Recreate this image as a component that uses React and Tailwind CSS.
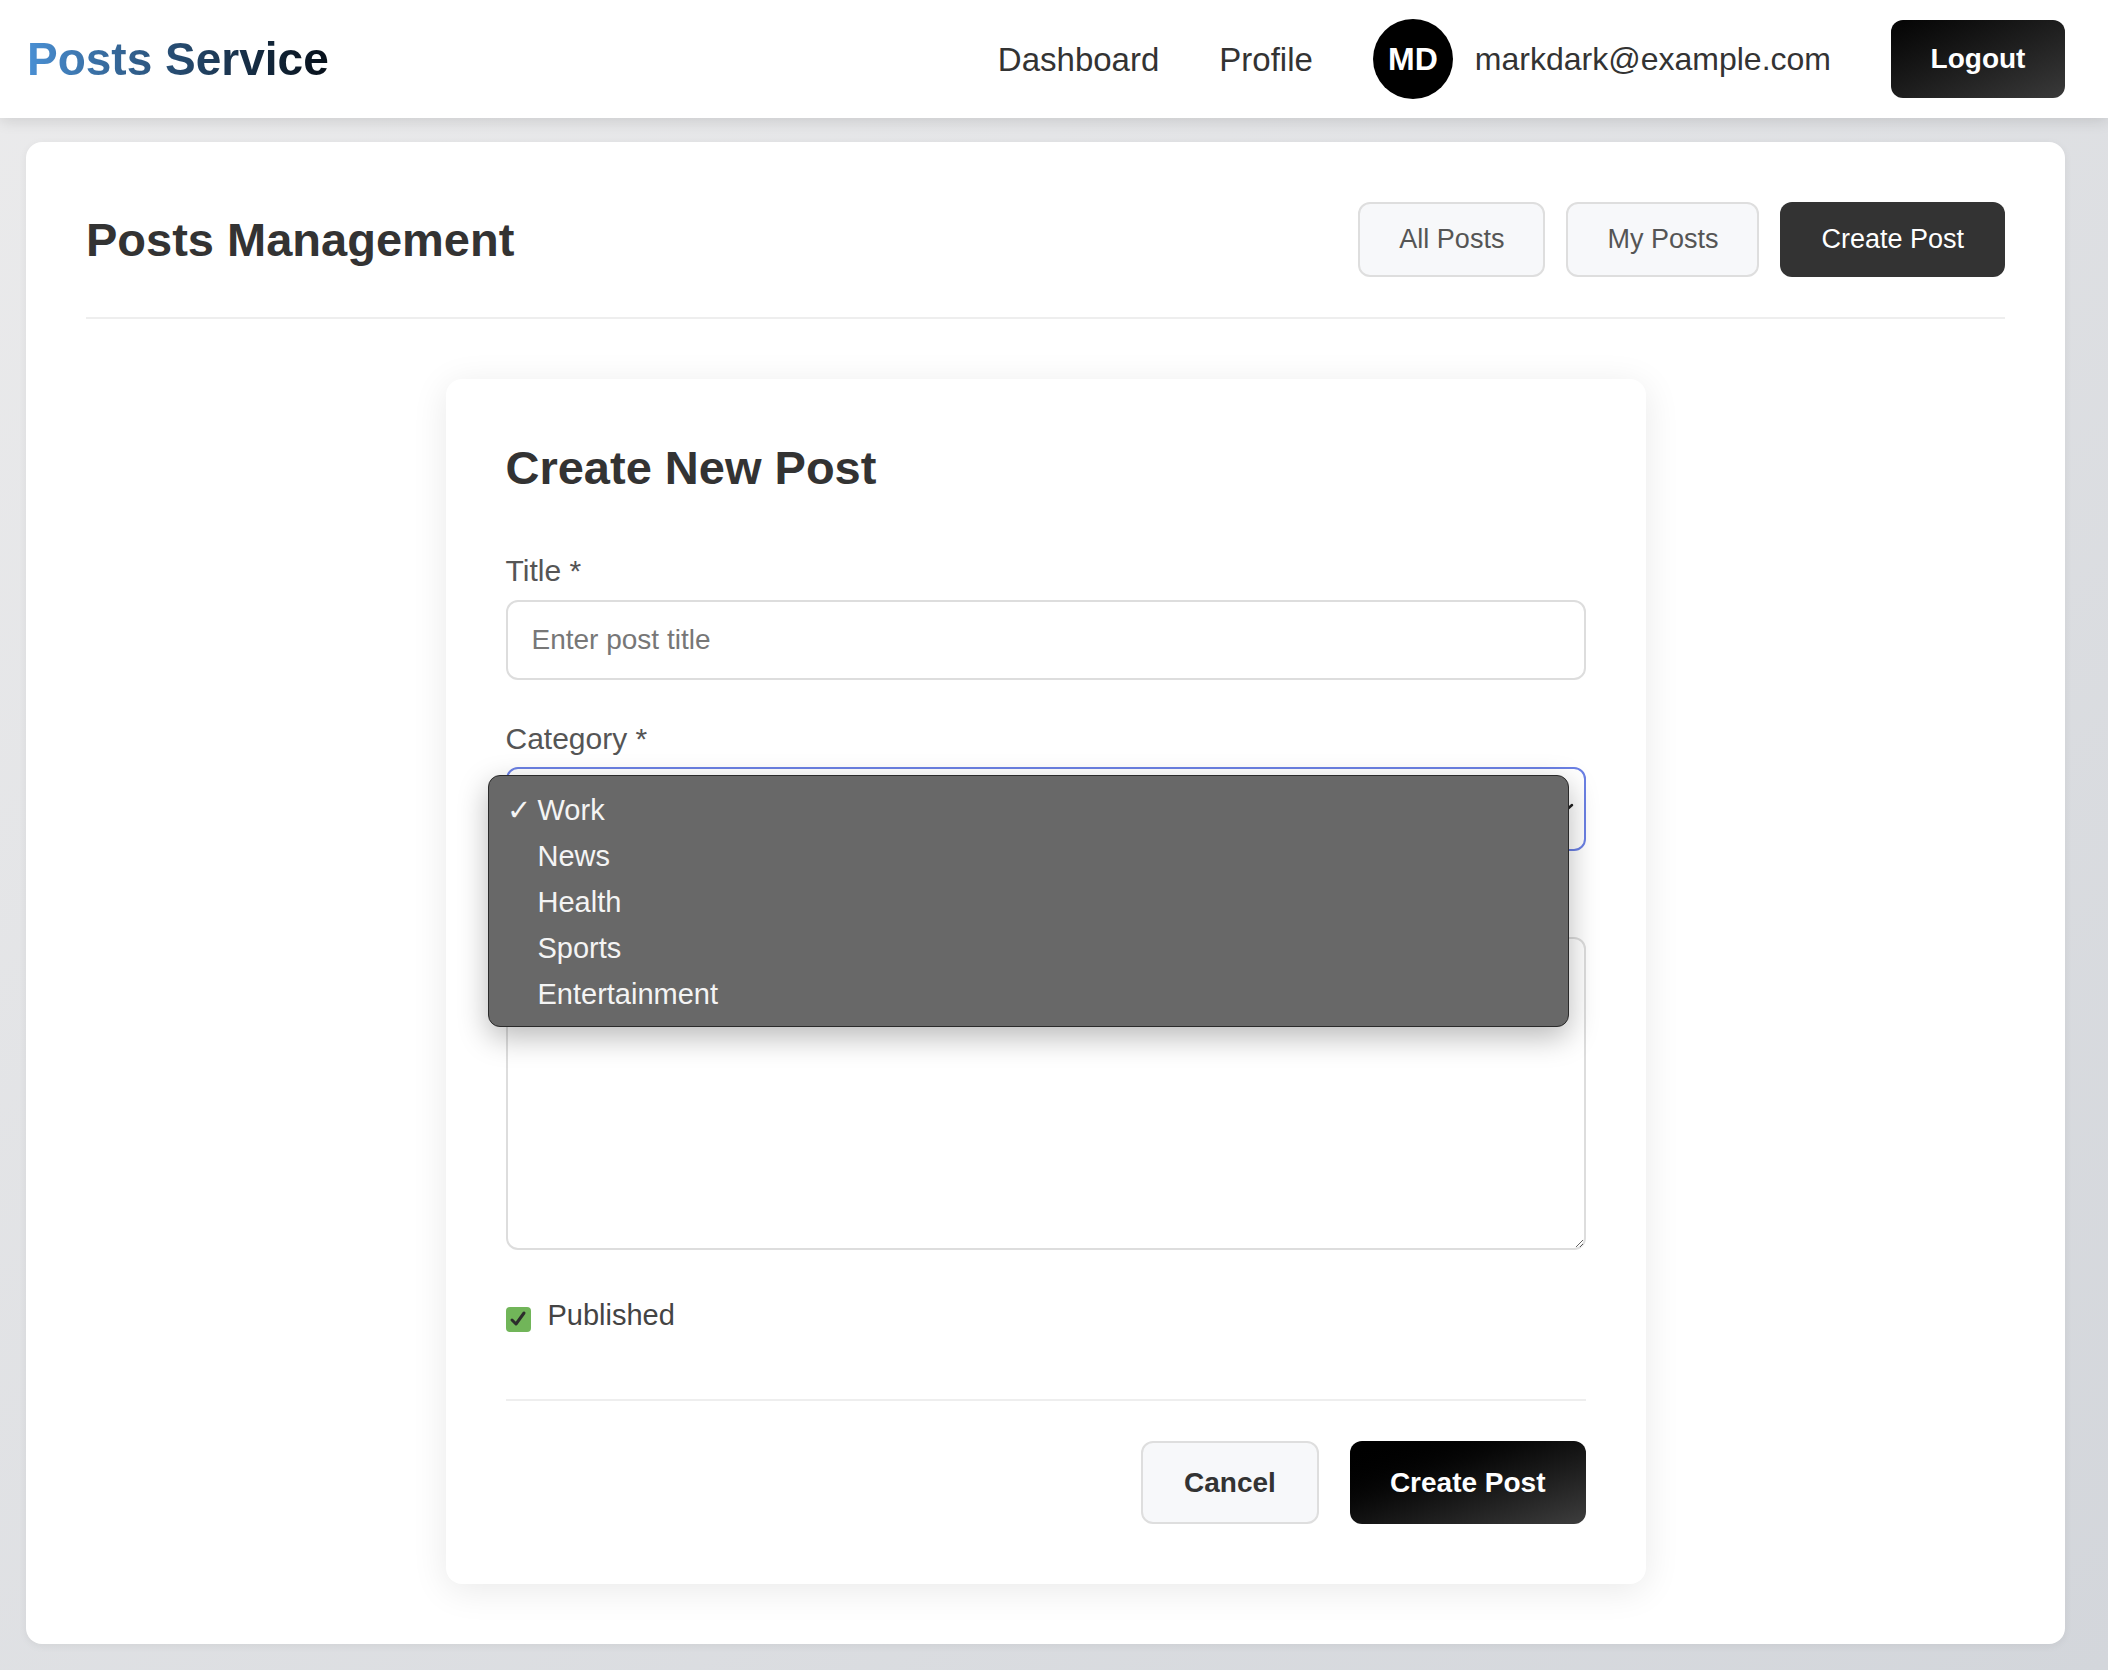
import React, { useState } from 'react';

const categories = ['Work', 'News', 'Health', 'Sports', 'Entertainment'];

const Header = () => (
    <header className="relative z-10 h-[118px] bg-white flex items-center justify-between pl-[27px] pr-[43px] shadow-[0_3px_14px_rgba(0,0,0,0.12)]">
        <h1 className="text-[46px] font-bold leading-none bg-linear-to-r from-[#4a90d4] to-[#07101a] bg-clip-text text-transparent">
            Posts Service
        </h1>
        <nav className="flex items-center text-[32px] text-[#333]">
            <a href="#" className="leading-none text-[33px]">Dashboard</a>
            <a href="#" className="ml-[60px] leading-none text-[33px]">Profile</a>
            <div className="ml-[60px] flex items-center gap-[22px]">
                <div className="w-[80px] h-[80px] rounded-full bg-black text-white font-bold text-[32px] flex items-center justify-center">
                    MD
                </div>
                <span className="leading-none">markdark@example.com</span>
            </div>
            <button className="ml-[60px] h-[78px] w-[174px] rounded-[12px] bg-linear-to-br from-[#050505] to-[#3a3a3a] text-white font-bold text-[28px]">
                Logout
            </button>
        </nav>
    </header>
);

const App = () => {
    const [published, setPublished] = useState(true);

    return (
        <div className="min-h-screen bg-linear-to-br from-[#ebebec] to-[#d3d6db] font-['Liberation_Sans',Arial,sans-serif]">
            <Header />

            <main className="pl-[26px] pr-[43px] pt-[24px] pb-[24px]">
                <div className="bg-white rounded-[16px] px-[60px] pt-[60px] pb-[60px] shadow-[0_2px_8px_rgba(0,0,0,0.06)]">
                    {/* Page title + tabs */}
                    <div className="flex items-center justify-between h-[75px]">
                        <h1 className="text-[47px] font-bold text-[#333] leading-none">Posts Management</h1>
                        <div className="flex items-center gap-[21px]">
                            <button className="h-[75px] px-[39px] border-2 border-[#dedede] bg-[#f7f8fa] rounded-[12px] text-[27px] text-[#555]">
                                All Posts
                            </button>
                            <button className="h-[75px] px-[39px] border-2 border-[#dedede] bg-[#f7f8fa] rounded-[12px] text-[27px] text-[#555]">
                                My Posts
                            </button>
                            <button className="h-[75px] px-[41px] bg-[#333] rounded-[12px] text-[27px] text-white">
                                Create Post
                            </button>
                        </div>
                    </div>
                    <div className="mt-[40px] h-[2px] bg-[#eeeeee]" />

                    {/* Form */}
                    <div className="mt-[60px] mx-auto w-[1200px] bg-white rounded-[16px] p-[60px] shadow-[0_6px_36px_rgba(0,0,0,0.09)]">
                        <h2 className="text-[47px] font-bold leading-[58px] text-[#333]">Create New Post</h2>

                        <label className="block mt-[56px] text-[30px] leading-[36px] text-[#555]">Title *</label>
                        <input
                            type="text"
                            placeholder="Enter post title"
                            className="mt-[11px] block w-full h-[80px] border-2 border-[#dddddd] rounded-[12px] px-[24px] text-[28px] text-[#333] placeholder:text-[#777] outline-none"
                        />

                        <label className="block mt-[41px] text-[30px] leading-[36px] text-[#555]">Category *</label>
                        <div className="relative mt-[10px]">
                            <div className="h-[84px] border-2 border-[#6b80e4] rounded-[12px] flex items-center justify-end pr-[10px]">
                                <svg width="22" height="14" viewBox="0 0 22 14" fill="none" stroke="#222" strokeWidth="2.5" strokeLinecap="round">
                                    <path d="M2 3l9 8 9-8" />
                                </svg>
                            </div>

                            {/* open native-style dropdown */}
                            <div className="absolute z-20 top-[8px] left-[-18px] w-[1081px] h-[252px] bg-[#686868] border border-[#2a2a2a] rounded-[12px] shadow-[0_10px_30px_rgba(0,0,0,0.28)] pt-[12px] text-[29px] text-[#f4f4f4]">
                                {categories.map((c, i) => (
                                    <div key={c} className="h-[46px] flex items-center">
                                        <span className="w-[49px] pl-[18px] text-[29px]">{i === 0 ? '✓' : ''}</span>
                                        <span>{c}</span>
                                    </div>
                                ))}
                            </div>
                        </div>

                        <div className="mt-[40px] h-[36px]" />
                        <textarea
                            className="mt-[10px] block w-full h-[313px] border-2 border-[#dddddd] rounded-[12px] px-[24px] py-[20px] text-[28px] outline-none resize-y"
                        />

                        <div className="mt-[48px] flex items-center h-[36px] cursor-pointer" onClick={() => setPublished(!published)}>
                            <div className={`w-[25px] h-[25px] rounded-[4px] flex items-center justify-center mt-[6px] ${published ? 'bg-[#71b559]' : 'bg-white border-2 border-[#999]'}`}>
                                {published && (
                                    <svg width="18" height="18" viewBox="0 0 18 18" fill="none" stroke="#2c2c2c" strokeWidth="3" strokeLinecap="round" strokeLinejoin="round">
                                        <path d="M3 10l4 4 8-11" />
                                    </svg>
                                )}
                            </div>
                            <span className="ml-[17px] text-[29px] text-[#444]">Published</span>
                        </div>

                        <div className="mt-[65px] h-[2px] bg-[#eeeeee]" />

                        <div className="mt-[40px] flex justify-end gap-[31px]">
                            <button className="h-[83px] px-[41px] border-2 border-[#dedede] bg-[#f7f8fa] rounded-[12px] text-[28px] font-bold text-[#333]">
                                Cancel
                            </button>
                            <button className="h-[83px] px-[40px] rounded-[12px] bg-linear-to-br from-[#000] to-[#3e3e3e] text-[28px] font-bold text-white">
                                Create Post
                            </button>
                        </div>
                    </div>
                </div>
            </main>
        </div>
    );
};

export default App;
